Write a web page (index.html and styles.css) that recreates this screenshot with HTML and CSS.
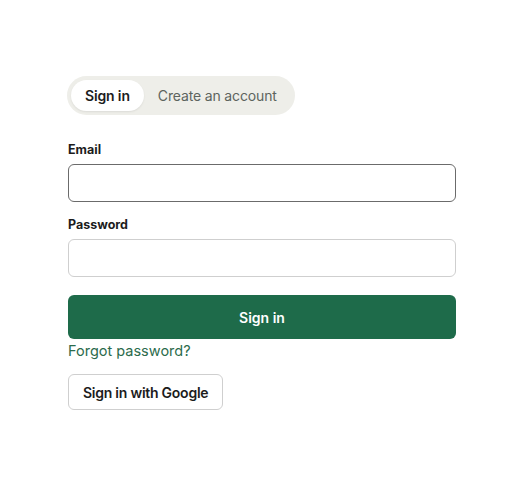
FILE: index.html
```html
<!DOCTYPE html>
<html lang="en">
<head>
    <meta charset="UTF-8">
    <meta name="viewport" content="width=device-width, initial-scale=1.0">
    <title>Sign in</title>
    <link rel="stylesheet" href="styles.css">
</head>
<body>
    <div class="container">
        <div class="tabs">
            <button class="tab active" type="button">Sign in</button>
            <button class="tab" type="button">Create an account</button>
        </div>
        <form class="form">
            <div class="form-control">
                <label for="email">Email</label>
                <input type="email" id="email" class="focused">
            </div>
            <div class="form-control">
                <label for="password">Password</label>
                <input type="password" id="password">
            </div>
            <button class="submit-btn" type="submit">Sign in</button>
            <a class="forgot" href="#">Forgot password?</a>
            <button class="google-btn" type="button">Sign in with Google</button>
        </form>
    </div>
</body>
</html>
```

FILE: styles.css
```css
*{
    box-sizing: border-box;
}
body{
    margin: 0;
    background-color: #fff;
    font-family: Inter, "Noto Sans", sans-serif;
    color: #1c1c1c;
}
.container{
    width: 388px;
    margin: 76px 0 0 68px;
}
.tabs{
    display: inline-flex;
    background-color: #eeeee9;
    border-radius: 20px;
    padding: 4px;
    margin-left: -1px;
}
.tab{
    font-family: inherit;
    font-size: 14px;
    line-height: 19px;
    letter-spacing: -0.15px;
    padding: 6px 14px;
    border: none;
    border-radius: 16px;
    background: transparent;
    color: #5d645e;
    cursor: pointer;
}
.tab.active{
    background-color: #fff;
    color: #1c1c1c;
    font-weight: 600;
    box-shadow: 0 1px 2px rgba(0, 0, 0, 0.08);
}
.form{
    margin-top: 27px;
}
.form-control{
    margin-bottom: 15px;
}
.form-control label{
    display: block;
    font-size: 12.5px;
    font-weight: 700;
    line-height: 16px;
    margin-bottom: 6px;
    color: #1c1c1c;
}
.form-control input{
    display: block;
    width: 100%;
    height: 38px;
    border: 1px solid #cfcfcf;
    border-radius: 6px;
    font-family: inherit;
    font-size: 14px;
    padding: 0 10px;
}
.form-control input.focused{
    border-color: #6b6b6b;
}
.submit-btn{
    display: block;
    width: 100%;
    height: 44px;
    margin-top: 18px;
    border: none;
    border-radius: 6px;
    background-color: #1e6b4a;
    color: #fff;
    font-family: inherit;
    font-size: 14px;
    font-weight: 600;
    cursor: pointer;
}
.forgot{
    display: block;
    margin-top: 2px;
    font-size: 14.5px;
    line-height: 20px;
    color: #2c6b4c;
    text-decoration: none;
}
.google-btn{
    display: block;
    margin-top: 13px;
    height: 36px;
    padding: 0 14px;
    border: 1px solid #cfcfcf;
    border-radius: 6px;
    background: #fff;
    font-family: inherit;
    font-size: 14px;
    font-weight: 600;
    letter-spacing: -0.25px;
    color: #1c1c1c;
    cursor: pointer;
}
```
